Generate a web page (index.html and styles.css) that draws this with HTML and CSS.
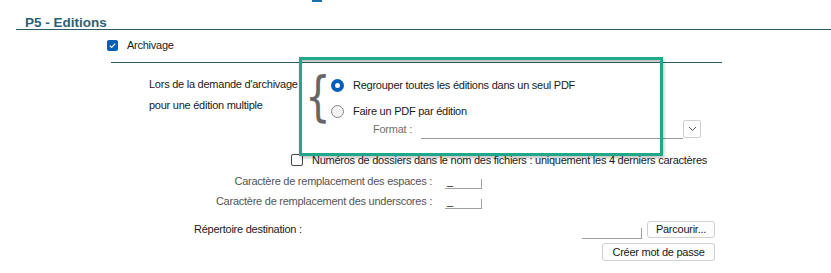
FILE: index.html
```html
<!DOCTYPE html>
<html lang="fr">
<head>
    <meta charset="UTF-8">
    <title>P5 - Editions</title>
    <link rel="stylesheet" href="styles.css">
</head>
<body>
    <div class="page">
        <div class="top-mark"></div>

        <div class="section-title">P5 - Editions</div>

        <div class="archive-row">
            <span class="check checked">
                <svg width="11" height="11" viewBox="0 0 11 11"><path d="M2.8 5.6 L4.6 7.4 L8.3 3.6" fill="none" stroke="#fff" stroke-width="1.1"/></svg>
            </span>
            <span class="label">Archivage</span>
        </div>
        <div class="sub-line"></div>

        <div class="multi-row">
            <div class="multi-label">
                <div>Lors de la demande d'archivage</div>
                <div>pour une édition multiple</div>
            </div>
            <div class="brace">{</div>
            <div class="radios">
                <div class="radio-row first">
                    <span class="radio on"></span>
                    <span>Regrouper toutes les éditions dans un seul PDF</span>
                </div>
                <div class="radio-row">
                    <span class="radio"></span>
                    <span>Faire un PDF par édition</span>
                </div>
                <div class="format-row">
                    <span class="muted">Format :</span>
                    <span class="combo"></span>
                    <span class="combo-btn">
                        <svg width="9" height="6" viewBox="0 0 9 6"><path d="M1 1 L4.5 4.5 L8 1" fill="none" stroke="#555" stroke-width="1"/></svg>
                    </span>
                </div>
            </div>
        </div>

        <div class="numbers-row">
            <span class="check"></span>
            <span>Numéros de dossiers dans le nom des fichiers : uniquement les 4 derniers caractères</span>
        </div>

        <div class="replace-row replace-first">
            <span class="replace-label">Caractère de remplacement des espaces :</span>
            <span class="small-input">_</span>
        </div>
        <div class="replace-row">
            <span class="replace-label">Caractère de remplacement des underscores :</span>
            <span class="small-input">_</span>
        </div>

        <div class="dir-row">
            <span class="dir-label">Répertoire destination :</span>
            <span class="dir-input"></span>
            <button class="btn btn-browse">Parcourir...</button>
        </div>
        <div class="pass-row">
            <button class="btn btn-pass">Créer mot de passe</button>
        </div>

        <div class="highlight"></div>
    </div>
</body>
</html>
```

FILE: styles.css
```css
body {
    margin: 0;
    padding: 0;
    background: #fff;
    font-family: "Liberation Sans", Arial, sans-serif;
    font-size: 11px;
    letter-spacing: -0.25px;
    color: #1a1a1a;
}
.page {
    position: relative;
    width: 831px;
    height: 273px;
    overflow: hidden;
}
.top-mark {
    width: 10px;
    height: 2px;
    margin-left: 312px;
    background: #1e6fa8;
}
.section-title {
    margin: 14px 0 0 16px;
    width: 806px;
    padding-left: 9px;
    font-weight: bold;
    font-size: 13.5px;
    letter-spacing: 0;
    line-height: 13px;
    color: #2d5f72;
    border-bottom: 1px solid #2d5a68;
}
.archive-row {
    display: flex;
    align-items: center;
    margin: 9px 0 0 107px;
    height: 12px;
}
.archive-row .label {
    margin-left: 9px;
}
.check {
    display: inline-block;
    box-sizing: border-box;
    width: 12px;
    height: 12px;
    border: 1px solid #444;
    border-radius: 2px;
    background: #fff;
}
.check.checked {
    width: 11px;
    height: 11px;
    border: none;
    background: #005fb8;
}
.check svg {
    display: block;
}
.sub-line {
    margin: 11px 0 0 111px;
    width: 611px;
    border-top: 1px solid #2d5a68;
}
.multi-row {
    display: flex;
    margin-top: 11px;
    height: 72px;
}
.multi-label {
    margin-left: 149px;
    width: 156px;
    line-height: 21px;
    white-space: nowrap;
}
.brace {
    width: 26px;
    margin-top: -8px;
    font-family: "DejaVu Sans", sans-serif;
    font-weight: normal;
    font-size: 54px;
    line-height: 62px;
    color: #666;
    transform: scaleX(0.75);
    transform-origin: left top;
}
.radios {
    flex: 1;
}
.radio-row {
    display: flex;
    align-items: center;
    height: 26px;
    gap: 9px;
}
.radio-row.first {
    margin-top: -2px;
}
.radio {
    box-sizing: border-box;
    width: 13px;
    height: 13px;
    border: 1px solid #888;
    border-radius: 50%;
    background: #f3f3f3;
}
.radio.on {
    border: 4px solid #005fb8;
    background: #fff;
}
.format-row {
    display: flex;
    align-items: flex-end;
    height: 19px;
    margin-top: -4px;
}
.muted {
    margin-left: 42px;
    width: 48px;
    color: #707070;
    line-height: 20px;
}
.combo {
    width: 262px;
    height: 18px;
    border-bottom: 1px solid #9a9a9a;
}
.combo-btn {
    box-sizing: border-box;
    width: 18px;
    height: 18px;
    border: 1px solid #cfcfcf;
    border-radius: 2px;
    display: flex;
    align-items: center;
    justify-content: center;
    margin-bottom: 1px;
}
.numbers-row {
    display: flex;
    align-items: center;
    gap: 9px;
    margin: 7px 0 0 291px;
    height: 14px;
}
.replace-row {
    display: flex;
    align-items: center;
    height: 19px;
    margin-top: 1px;
}
.replace-row.replace-first {
    margin-top: 4px;
}
.replace-label {
    width: 432px;
    text-align: right;
    color: #555;
}
.small-input {
    box-sizing: border-box;
    width: 37px;
    height: 10px;
    margin: 6px 0 0 13px;
    padding-left: 2px;
    line-height: 4px;
    border-right: 1px solid #a0a0a0;
    border-bottom: 1px solid #a0a0a0;
}
.dir-row {
    display: flex;
    align-items: center;
    margin-top: 10px;
    height: 18px;
}
.dir-label {
    margin-left: 194px;
    width: 388px;
}
.dir-input {
    box-sizing: border-box;
    width: 60px;
    height: 11px;
    margin-top: 8px;
    border-right: 1px solid #a0a0a0;
    border-bottom: 1px solid #a0a0a0;
}
.btn {
    font-family: "Liberation Sans", Arial, sans-serif;
    font-size: 11px;
    letter-spacing: -0.25px;
    color: #1a1a1a;
    background: #fdfdfd;
    border: 1px solid #d0d0d0;
    border-radius: 3px;
    padding: 0;
    height: 17px;
}
.btn-browse {
    width: 68px;
    margin-left: 5px;
}
.pass-row {
    display: flex;
    margin-top: 5px;
}
.btn-pass {
    width: 113px;
    height: 18px;
    margin-left: 602px;
}
.highlight {
    position: absolute;
    left: 299px;
    top: 57px;
    width: 358px;
    height: 93px;
    border: 3px solid #1fa88a;
    box-shadow: 1px 2px 3px rgba(0, 0, 0, 0.25), inset 0 2px 1px rgba(0, 0, 0, 0.22);
}
```
